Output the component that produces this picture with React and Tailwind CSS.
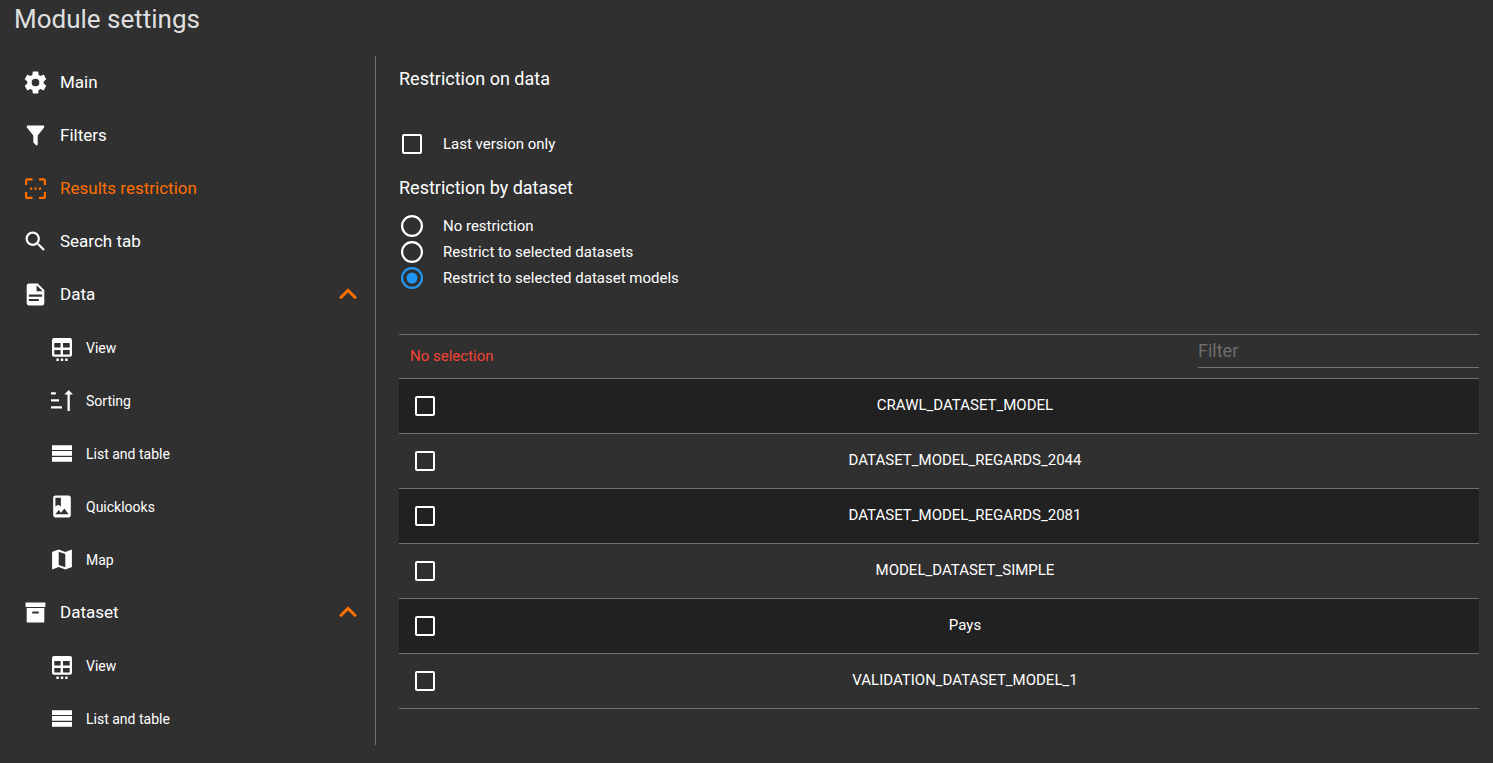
import { useState } from 'react'

function Icon({ children, className = 'size-[27px]' }) {
  return (
    <svg
      viewBox="-0.27 -0.27 24.54 24.54"
      preserveAspectRatio="xMidYMid slice"
      fill="currentColor"
      aria-hidden="true"
      className={`shrink-0 ${className}`}
    >
      {children}
    </svg>
  )
}

function SubIcon({ children }) {
  return (
    <svg viewBox="0 0 26 27" fill="currentColor" aria-hidden="true" className="h-[27px] w-[26px] shrink-0">
      {children}
    </svg>
  )
}

const SettingsIcon = () => (
  <Icon>
    <path d="M12,15.5A3.5,3.5 0 0,1 8.5,12A3.5,3.5 0 0,1 12,8.5A3.5,3.5 0 0,1 15.5,12A3.5,3.5 0 0,1 12,15.5M19.43,12.97C19.47,12.65 19.5,12.33 19.5,12C19.5,11.67 19.47,11.34 19.43,11L21.54,9.37C21.73,9.22 21.78,8.95 21.66,8.73L19.66,5.27C19.54,5.05 19.27,4.96 19.05,5.05L16.56,6.05C16.04,5.66 15.5,5.32 14.87,5.07L14.5,2.42C14.46,2.18 14.25,2 14,2H10C9.75,2 9.54,2.18 9.5,2.42L9.13,5.07C8.5,5.32 7.96,5.66 7.44,6.05L4.95,5.05C4.73,4.96 4.46,5.05 4.34,5.27L2.34,8.73C2.21,8.95 2.27,9.22 2.46,9.37L4.57,11C4.53,11.34 4.5,11.67 4.5,12C4.5,12.33 4.53,12.65 4.57,12.97L2.46,14.63C2.27,14.78 2.21,15.05 2.34,15.27L4.34,18.73C4.46,18.95 4.73,19.03 4.95,18.95L7.44,17.94C7.96,18.34 8.5,18.68 9.13,18.93L9.5,21.58C9.54,21.82 9.75,22 10,22H14C14.25,22 14.46,21.82 14.5,21.58L14.87,18.93C15.5,18.67 16.04,18.34 16.56,17.94L19.05,18.95C19.27,19.03 19.54,18.95 19.66,18.73L21.66,15.27C21.78,15.05 21.73,14.78 21.54,14.63L19.43,12.97Z" />
  </Icon>
)

const FilterIcon = () => (
  <Icon>
    <path d="M14,12V19.88C14.04,20.18 13.94,20.5 13.71,20.71C13.32,21.1 12.69,21.1 12.3,20.71L10.29,18.7C10.06,18.47 9.96,18.16 10,17.87V12H9.97L4.21,4.62C3.87,4.19 3.95,3.56 4.38,3.22C4.57,3.08 4.78,3 5,3V3H19V3C19.22,3 19.43,3.08 19.62,3.22C20.05,3.56 20.13,4.19 19.79,4.62L14.03,12H14Z" />
  </Icon>
)

const RestrictionIcon = () => (
  <svg viewBox="0 0 27 27" fill="currentColor" aria-hidden="true" className="size-[27px] shrink-0">
    <path
      d="M4.1 10V5.9Q4.1 4.4 5.6 4.4H10.5M17 4.4H21.4Q22.9 4.4 22.9 5.9V10M22.9 17V21.4Q22.9 22.9 21.4 22.9H17M10.5 22.9H5.6Q4.1 22.9 4.1 21.4V17"
      fill="none"
      stroke="currentColor"
      strokeWidth="2.2"
    />
    <path d="M8 12.6h2.2v2.2H8zM12.4 12.6h2.2v2.2h-2.2zM16.8 12.6h2.2v2.2h-2.2z" />
  </svg>
)

const SearchIcon = () => (
  <Icon>
    <path d="M15.5 14h-.79l-.28-.27C15.41 12.59 16 11.11 16 9.5 16 5.91 13.09 3 9.5 3S3 5.91 3 9.5 5.91 16 9.5 16c1.61 0 3.09-.59 4.23-1.57l.27.28v.79l5 4.99L20.49 19l-4.99-5zm-6 0C7.01 14 5 11.99 5 9.5S7.01 5 9.5 5 14 7.01 14 9.5 11.99 14 9.5 14z" />
  </Icon>
)

const DataIcon = () => (
  <Icon>
    <path d="M13,9H18.5L13,3.5V9M6,2H14L20,8V20A2,2 0 0,1 18,22H6C4.89,22 4,21.1 4,20V4C4,2.89 4.89,2 6,2M15,18V16H6V18H15M18,14V12H6V14H18Z" />
  </Icon>
)

const ViewIcon = () => (
  <SubIcon>
    <path
      fillRule="evenodd"
      d="M5 4H21Q23 4 23 6V20.8Q23 22.8 21 22.8H5Q3 22.8 3 20.8V6Q3 4 5 4ZM5.3 9V13.6H11.6V9ZM14 9V13.6H20.7V9ZM5.3 16V20.6H11.6V16ZM14 16V20.6H20.7V16Z"
    />
    <path d="M7.4 24.6h2.4V27H7.4zM11.8 24.6h2.4V27h-2.4zM16.2 24.6h2.4V27h-2.4z" />
  </SubIcon>
)

const SortingIcon = () => (
  <SubIcon>
    <path d="M2 5.3h4.8v2.3H2zM2 12.3h8v2.3H2zM2 19.2h11v2.3H2z" />
    <path d="M19.7 3L24 7.6H20.8V24H18.5V7.6H15.3Z" />
  </SubIcon>
)

const ListIcon = () => (
  <SubIcon>
    <path d="M3 5.2h20V10H3zM3 11.1h20v4.7H3zM3 16.9h20v4.9H3z" />
  </SubIcon>
)

const AlbumIcon = () => (
  <Icon className="h-[27px] w-[26px]">
    <path d="M18 2H6c-1.1 0-2 .9-2 2v16c0 1.1.9 2 2 2h12c1.1 0 2-.9 2-2V4c0-1.1-.9-2-2-2zM6 4h5v8l-2.5-1.5L6 12V4zm0 15l3-3.86 2.14 2.58 3-3.86L18 19H6z" />
  </Icon>
)

const MapIcon = () => (
  <Icon className="h-[27px] w-[26px]">
    <path d="M20.5 3l-.16.03L15 5.1 9 3 3.36 4.9c-.21.07-.36.25-.36.48V20.5c0 .28.22.5.5.5l.16-.03L9 18.9l6 2.1 5.64-1.9c.21-.07.36-.25.36-.48V3.5c0-.28-.22-.5-.5-.5zM15 19l-6-2.11V5l6 2.11V19z" />
  </Icon>
)

const ArchiveIcon = () => (
  <Icon>
    <path d="M3,3H21V7H3V3M4,8H20V21H4V8M9.5,11A0.5,0.5 0 0,0 9,11.5V13H15V11.5A0.5,0.5 0 0,0 14.5,11H9.5Z" />
  </Icon>
)

const ChevronUp = () => (
  <svg viewBox="0 0 36 37" fill="currentColor" aria-hidden="true" className="ml-auto h-[37px] w-9 shrink-0 text-[#ff6f00]">
    <path d="M18 12.2l-9 9 2.1 2.1L18 16.4l6.9 6.9L27 21.2z" />
  </svg>
)

const sections = [
  { label: 'Main', icon: SettingsIcon },
  { label: 'Filters', icon: FilterIcon },
  { label: 'Results restriction', icon: RestrictionIcon, current: true },
  { label: 'Search tab', icon: SearchIcon },
  {
    label: 'Data',
    icon: DataIcon,
    children: [
      { label: 'View', icon: ViewIcon },
      { label: 'Sorting', icon: SortingIcon },
      { label: 'List and table', icon: ListIcon },
      { label: 'Quicklooks', icon: AlbumIcon },
      { label: 'Map', icon: MapIcon },
    ],
  },
  {
    label: 'Dataset',
    icon: ArchiveIcon,
    children: [
      { label: 'View', icon: ViewIcon },
      { label: 'List and table', icon: ListIcon },
    ],
  },
]

const models = [
  'CRAWL_DATASET_MODEL',
  'DATASET_MODEL_REGARDS_2044',
  'DATASET_MODEL_REGARDS_2081',
  'MODEL_DATASET_SIMPLE',
  'Pays',
  'VALIDATION_DATASET_MODEL_1',
]

const restrictions = ['No restriction', 'Restrict to selected datasets', 'Restrict to selected dataset models']

function NavItem({ item }) {
  const { icon: Glyph, label, current, children } = item
  return (
    <li>
      <button
        type="button"
        aria-expanded={children ? true : undefined}
        className={`flex h-[53px] w-full items-center gap-[11px] pr-[9px] pl-2 text-left text-[17px] ${current ? 'text-[#ff6f00]' : 'text-white'}`}
      >
        <Glyph />
        <span>{label}</span>
        {children && <ChevronUp />}
      </button>
      {children && (
        <ul>
          {children.map((child) => (
            <li key={child.label}>
              <button type="button" className="flex h-[53px] w-full items-center gap-[11px] pl-[35px] text-left text-sm text-white">
                <child.icon />
                <span>{child.label}</span>
              </button>
            </li>
          ))}
        </ul>
      )}
    </li>
  )
}

function Checkbox(props) {
  return (
    <input
      type="checkbox"
      className="m-[3px] block size-5 shrink-0 appearance-none rounded-[2px] border-2 border-white checked:border-[#2196f3] checked:bg-[#2196f3]"
      {...props}
    />
  )
}

function Radio({ label, checked, onChange }) {
  return (
    <label className="relative flex h-[26px] items-center gap-[18px] text-[15px]">
      <input type="radio" name="restriction" checked={checked} onChange={onChange} className="absolute inset-0 opacity-0" />
      <svg
        viewBox="0 0 26 26"
        fill="currentColor"
        aria-hidden="true"
        className={`size-[26px] shrink-0 ${checked ? 'text-[#2196f3]' : 'text-white'}`}
      >
        <circle cx="13" cy="13" r="9.9" fill="none" stroke="currentColor" strokeWidth="2.2" />
        {checked && <circle cx="13" cy="13" r="5.5" />}
      </svg>
      {label}
    </label>
  )
}

export default function App() {
  const [restriction, setRestriction] = useState(2)
  return (
    <div className="min-h-screen bg-[#303030] px-3.5 pb-[18px] font-[Roboto,sans-serif] text-white">
      <h1 className="h-14 pt-px text-[26px] leading-9 text-white/87">Module settings</h1>
      <div className="flex">
        <nav aria-label="Module settings" className="w-[362px] shrink-0 border-r border-[#6e6e6e]">
          <ul>
            {sections.map((item) => (
              <NavItem key={item.label} item={item} />
            ))}
          </ul>
        </nav>
        <main className="min-w-0 grow pl-[23px]">
          <h2 className="pt-[11px] text-lg leading-6">Restriction on data</h2>
          <label className="mt-10 flex items-center gap-[18px] text-[15px]">
            <Checkbox />
            Last version only
          </label>
          <h2 className="mt-[19px] text-lg leading-6">Restriction by dataset</h2>
          <div role="radiogroup" aria-label="Restriction by dataset" className="mt-[13px]">
            {restrictions.map((label, index) => (
              <Radio key={label} label={label} checked={restriction === index} onChange={() => setRestriction(index)} />
            ))}
          </div>
          <div className="mt-[43px] flex h-11 items-start justify-between border-t border-[#6e6e6e] pl-[11px]">
            <p className="pt-[9px] text-[15px] leading-6 text-[#f44336]">No selection</p>
            <input
              type="text"
              aria-label="Filter"
              placeholder="Filter"
              className="h-[33px] w-[281px] border-b border-[#757575] bg-transparent pb-0.5 text-lg leading-7 outline-none placeholder:text-[#6e6e6e]"
            />
          </div>
          <table className="w-full border-separate border-spacing-0 border-t border-[#6e6e6e] text-center text-[15px]">
            <tbody>
              {models.map((model, index) => (
                <tr key={model} className="h-[55px] odd:bg-[#212121]">
                  <td className="w-[52px] border-b border-[#6e6e6e] px-[13px] py-0">
                    <Checkbox id={`model-${index}`} />
                  </td>
                  <td className="border-b border-[#6e6e6e] p-0 pb-0.5">
                    <label htmlFor={`model-${index}`}>{model}</label>
                  </td>
                </tr>
              ))}
            </tbody>
          </table>
        </main>
      </div>
    </div>
  )
}
